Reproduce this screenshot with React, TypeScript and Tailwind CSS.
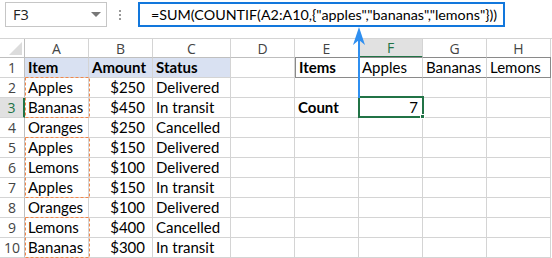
import React from 'react'

const cols = ['A', 'B', 'C', 'D', 'E', 'F', 'G', 'H']

const formula = '=SUM(COUNTIF(A2:A10,{"apples","bananas","lemons"}))'

const data: { item: string; amount: string; status: string }[] = [
  { item: 'Apples', amount: '$250', status: 'Delivered' },
  { item: 'Bananas', amount: '$450', status: 'In transit' },
  { item: 'Oranges', amount: '$250', status: 'Cancelled' },
  { item: 'Apples', amount: '$150', status: 'Delivered' },
  { item: 'Lemons', amount: '$100', status: 'Delivered' },
  { item: 'Apples', amount: '$150', status: 'In transit' },
  { item: 'Oranges', amount: '$100', status: 'Delivered' },
  { item: 'Lemons', amount: '$400', status: 'Cancelled' },
  { item: 'Bananas', amount: '$300', status: 'In transit' },
]

const cell = 'border-r border-b border-[#d4d4d4] flex items-center overflow-hidden whitespace-nowrap text-black'

const Cell = ({ children, className = '' }: { children?: React.ReactNode; className?: string }) => (
  <div className={`${cell} ${className}`}>{children}</div>
)

// marching-ants style box around a criteria range
const Dashed = ({ top, h }: { top: number; h: number }) => (
  <svg className="absolute left-[25px] pointer-events-none" style={{ top }} width="66" height={h + 1}>
    <rect x="0.5" y="0.5" width="64" height={h - 0} fill="none" stroke="#f0874a" strokeWidth="1" strokeDasharray="3 2" />
  </svg>
)

const App = () => {
  return (
    <div className="relative w-[552px] h-[258px] bg-white overflow-hidden text-[15px] font-['Lato',sans-serif]">
      {/* Formula bar */}
      <div className="flex items-start h-[38px] pt-[2px]">
        <div className="ml-[5px] w-[102px] h-[25px] border border-[#c6c6c6] flex items-center justify-between pl-[7px] pr-[5px] text-[14.5px] text-[#222] font-['Open_Sans',sans-serif]">
          <span>F3</span>
          <svg width="10" height="6" viewBox="0 0 10 6"><path d="M0 0 L10 0 L5 5 Z" fill="#777" /></svg>
        </div>
        <div className="ml-[12px] mt-[8px] w-[3px] flex flex-col gap-[2px]">
          <div className="w-[2px] h-[2px] bg-[#999]" />
          <div className="w-[2px] h-[2px] bg-[#999]" />
          <div className="w-[2px] h-[2px] bg-[#999]" />
        </div>
        <div className="ml-[16px] w-[367px] h-[25px] border-2 border-[#1277dc] flex items-center pl-[11px] text-[14.3px] text-black whitespace-nowrap overflow-hidden">
          {formula}
        </div>
      </div>

      {/* Sheet grid */}
      <div className="grid grid-cols-[25px_64px_64px_78px_64px_64px_64px_64px_64px] grid-rows-[19px_repeat(10,20px)] border-t border-[#d4d4d4]">
        {/* corner */}
        <div className="relative border-r border-b border-[#bfbfbf] bg-white">
          <svg className="absolute right-[2px] bottom-[2px]" width="13" height="13" viewBox="0 0 13 13"><path d="M13 0 L13 13 L0 13 Z" fill="#dcdcdc" /></svg>
        </div>
        {cols.map((c) => (
          <div
            key={c}
            className={`flex items-center justify-center text-[14px] font-['Open_Sans',sans-serif] ${
              c === 'F'
                ? 'bg-[#e1e1e1] text-[#217346] border-r border-[#d4d4d4] border-b-2 border-b-[#217346]'
                : 'bg-white text-[#444] border-r border-b border-[#d4d4d4] border-b-[#bfbfbf]'
            }`}
          >
            {c}
          </div>
        ))}

        {/* row 1 */}
        <div className="flex items-center justify-center text-[14px] text-[#444] font-['Open_Sans',sans-serif] border-r border-b border-[#bfbfbf] border-b-[#d4d4d4]">1</div>
        <Cell className="bg-[#d9e1f2] font-bold pl-[3px]">Item</Cell>
        <Cell className="bg-[#d9e1f2] font-bold pl-[3px]">Amount</Cell>
        <Cell className="bg-[#d9e1f2] font-bold pl-[3px]">Status</Cell>
        <Cell />
        <div className="border-y border-l border-[#8a8a8a] border-r border-r-[#d4d4d4] flex items-center pl-[3px] font-bold text-black -mt-px">Items</div>
        <div className="border-y border-[#8a8a8a] border-r border-r-[#d4d4d4] flex items-center pl-[3px] text-black -mt-px">Apples</div>
        <div className="border-y border-[#8a8a8a] border-r border-r-[#d4d4d4] flex items-center pl-[3px] text-black -mt-px">Bananas</div>
        <div className="border-y border-[#8a8a8a] border-r flex items-center pl-[3px] text-black -mt-px">Lemons</div>

        {data.map((r, i) => {
          const n = i + 2
          return (
            <React.Fragment key={n}>
              <div
                className={`flex items-center justify-center text-[14px] font-['Open_Sans',sans-serif] border-b border-[#d4d4d4] ${
                  n === 3 ? 'bg-[#e1e1e1] text-[#217346] border-r-2 border-r-[#217346]' : 'text-[#444] border-r border-r-[#bfbfbf]'
                }`}
              >
                {n}
              </div>
              <Cell className="pl-[3px]">{r.item}</Cell>
              <Cell className="justify-end pr-[7px]">{r.amount}</Cell>
              <Cell className="pl-[3px]">{r.status}</Cell>
              <Cell />
              <Cell className="pl-[3px] font-bold">{n === 3 ? 'Count' : ''}</Cell>
              <Cell className="justify-end pr-[4px]">{n === 3 ? '7' : ''}</Cell>
              <Cell />
              <Cell />
            </React.Fragment>
          )
        })}
      </div>

      {/* Dashed criteria ranges */}
      <Dashed top={77} h={40} />
      <Dashed top={137} h={60} />
      <Dashed top={217} h={40} />

      {/* Active cell F3 */}
      <div className="absolute left-[358px] top-[96px] w-[66px] h-[22px] border-2 border-[#217346] pointer-events-none" />
      <div className="absolute left-[420px] top-[114px] w-[5px] h-[5px] bg-[#217346] border border-white pointer-events-none" />

      {/* Arrow */}
      <svg className="absolute left-[352px] top-[26px] pointer-events-none" width="14" height="72" viewBox="0 0 14 72">
        <rect x="6" y="10" width="2" height="62" fill="#2f8ff0" />
        <path d="M7 1 L13 19 L7 14 L1 19 Z" fill="#2f8ff0" />
      </svg>
    </div>
  )
}

export default App
